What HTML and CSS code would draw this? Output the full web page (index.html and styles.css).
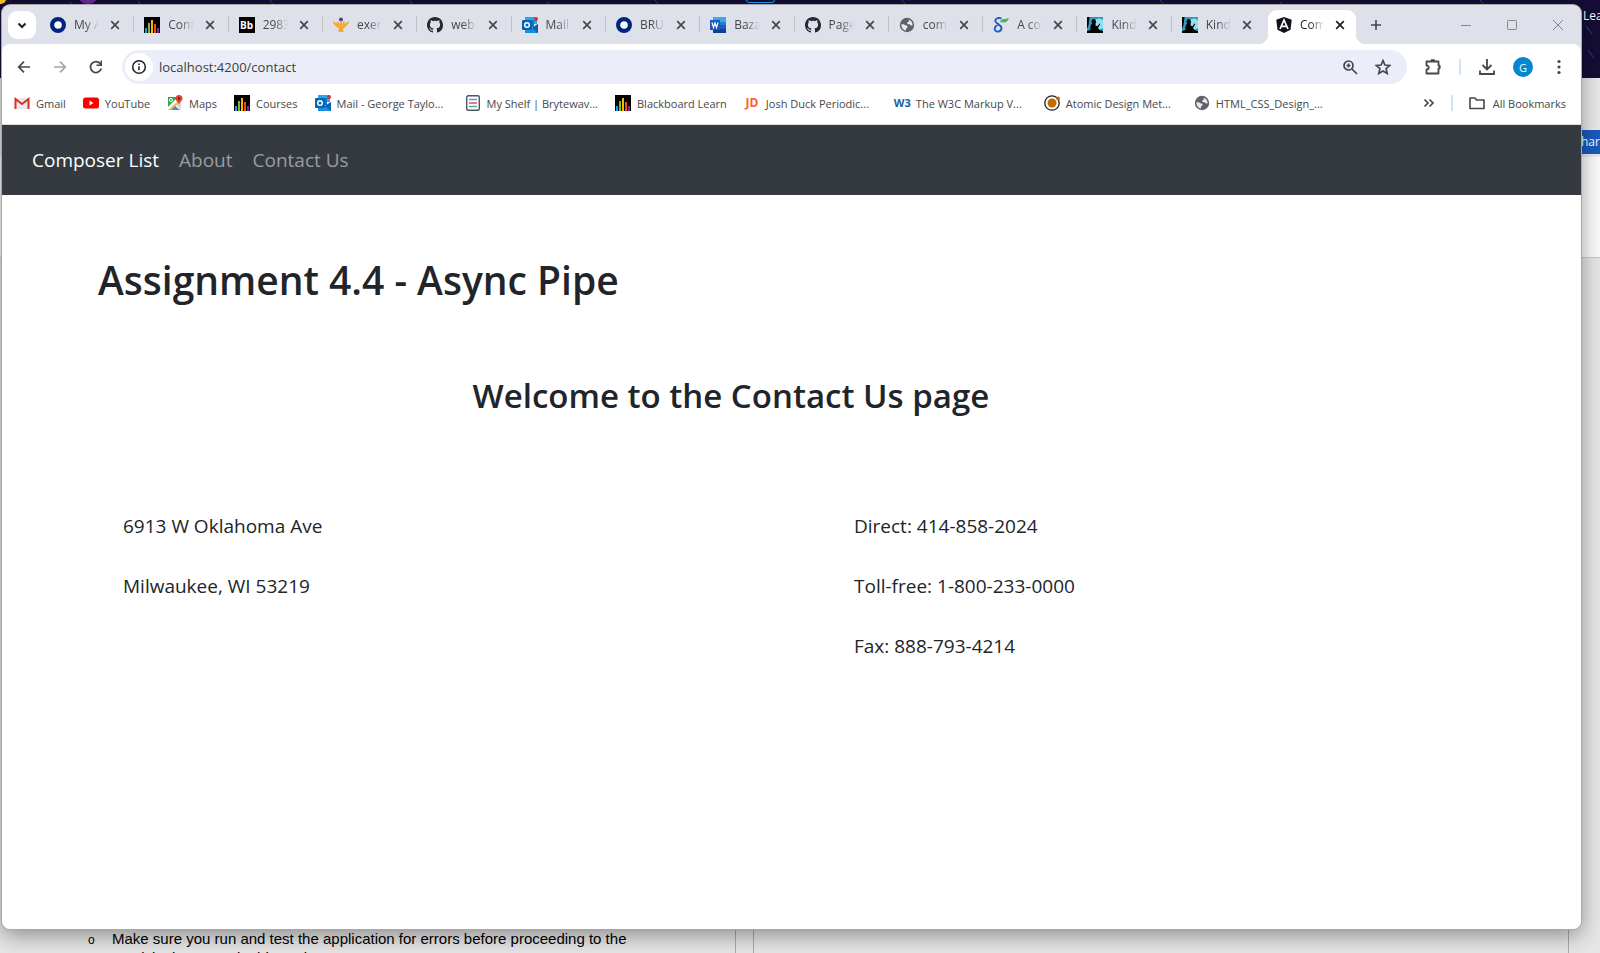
FILE: index.html
```html
<!DOCTYPE html>
<html lang="en">
<head>
<meta charset="utf-8">
<title>Contact Us</title>
<link rel="stylesheet" href="styles.css">
</head>
<body>
<svg class="sprite" aria-hidden="true">
  <symbol id="x" viewBox="0 0 16 16"><path d="M4.200 4.200l7.600 7.600M11.800 4.200l-7.600 7.600" stroke="currentColor" stroke-width="1.700" fill="none"/></symbol>
  <symbol id="ring" viewBox="0 0 16 16"><circle cx="8" cy="8" r="5.900" fill="#fff" stroke="#00267f" stroke-width="4.200"/></symbol>
  <symbol id="bars" viewBox="0 0 16 16"><path fill="#000" d="M0 0h16v16H0z"/><path stroke="#1e9bd8" stroke-width="2" d="M2 11v5"/><path stroke="#7cb82f" stroke-width="2" d="M5 6v10"/><path stroke="#f5b800" stroke-width="2" d="M8 3v13"/><path stroke="#e8501e" stroke-width="2" d="M11 7v9"/><path stroke="#7a2d8c" stroke-width="2" d="M14 11v5"/></symbol>
  <symbol id="github" viewBox="0 0 16 16"><path fill="#24292f" d="M8 0C3.580 0 0 3.580 0 8c0 3.540 2.290 6.530 5.470 7.590.4.070.55-.17.55-.38 0-.19-.01-.82-.01-1.490-2.010.37-2.530-.49-2.690-.94-.09-.23-.48-.94-.82-1.130-.28-.15-.68-.52-.01-.53.63-.01 1.080.58 1.230.82.72 1.210 1.870.87 2.330.66.070-.52.28-.87.51-1.070-1.780-.2-3.640-.89-3.640-3.950 0-.87.31-1.590.82-2.150-.08-.2-.36-1.020.08-2.120 0 0 .67-.21 2.200.82.64-.18 1.320-.27 2-.27s1.360.09 2 .27c1.530-1.040 2.200-.82 2.200-.82.44 1.100.16 1.920.08 2.120.51.56.82 1.270.82 2.150 0 3.070-1.870 3.750-3.650 3.950.29.25.54.73.54 1.480 0 1.070-.01 1.930-.01 2.200 0 .21.15.46.55.38A8.010 8.010 0 0016 8c0-4.420-3.580-8-8-8z"/></symbol>
  <symbol id="outlook" viewBox="0 0 16 16"><path fill="#28a8ea" d="M3 0h12v7H3z"/><path fill="#0078d4" d="M3 3h9v7H3z"/><path fill="#1490df" d="M3 7l7 4 6-4v9H3z"/><path fill="#0a5ea8" d="M10 11l6-4v9z"/><rect y="3" width="10" height="10" rx="1" fill="#0364b8"/><circle cx="5" cy="8" r="2.300" fill="none" stroke="#fff" stroke-width="1.500"/><circle cx="14" cy="2" r="2" fill="#d13438"/></symbol>
  <symbol id="globe" viewBox="0 0 16 16"><circle cx="8" cy="8" r="7.200" fill="#5f6368"/><path d="M2.400 7.300h2.200c1.200 0 1.200 1.300 2.400 1.300.9 0 1.600.5 1.600 1.300 0 1-1.600.9-1.600 1.900v1.800C4.300 13.200 2.200 10.600 2.400 7.300zM9.700 2.700c2.400.8 3.900 2.800 3.900 5.200-.8 1-1.700.6-2.200 0-.6-.8-1.300-.6-2-.6-1.500 0-1.700-2.200-.2-2.300 1 0 .5-1 .5-2.300z" fill="#e8eaed"/></symbol>
  <symbol id="kindle" viewBox="0 0 16 16"><path fill="#2f9abc" d="M0 0h16v16H0z"/><circle cx="12" cy="7" r="5.500" fill="#8fe0ee"/><path fill="#000" d="M0 16v-2l3.500-1C3 10 4 7.500 5.300 6.300a2.300 2.300 0 113.400-.5L8.500 8.500l2 .8 2-2.800.8.600-2.300 4 1.800 2.200L16 14v2zM0 0h2.500L1.500 8 0 12z"/></symbol>
  <symbol id="caret" viewBox="0 0 16 16"><path d="M4.500 6.500L8 10l3.500-3.500" fill="none" stroke="currentColor" stroke-width="2"/></symbol>
</svg>

<div class="desktop" aria-hidden="true">
  <div class="wallpaper"><svg class="streaks" viewBox="0 0 1600 78" preserveAspectRatio="none"><path stroke="#4038a0" d="M70 2l4 5M138 1l3 5M270 0l4 6M410 1l5 6M547 2l3 4M655 0l4 5M902 0l4 5M1160 0l4 5M1280 2l4 4M1480 0l5 6M1586 26l6 8M1588 50l6 8"/><circle cx="88" cy="-7" r="11" fill="#68299a"/><circle cx="1" cy="-1" r="5" fill="#ffc21a"/></svg><i class="taskbox"></i><span class="shortcut">Lea</span></div>
  <div class="word">
    <div class="ribbon-tabs"><span class="share">har</span></div>
    <div class="ribbon"></div>
    <div class="pages">
      <div class="page page-left"><ul class="steps"><li>Make sure you run and test the application for errors before proceeding to the<br>provisioning stage in this assignment.</li></ul></div>
      <div class="page page-right"></div>
    </div>
  </div>
</div>

<div class="window">
  <header class="tabstrip">
    <button class="tab-search" aria-label="Search tabs"><svg class="i16"><use href="#caret"/></svg></button>
    <div class="tabs">
      <div class="tab"><svg class="i16"><use href="#ring"/></svg><span class="label">My Account</span><button class="close" aria-label="Close"><svg class="i16"><use href="#x"/></svg></button></div>
      <div class="tab"><svg class="i16"><use href="#bars"/></svg><span class="label">Content</span><button class="close" aria-label="Close"><svg class="i16"><use href="#x"/></svg></button></div>
      <div class="tab"><span class="bb">Bb</span><span class="label">29835</span><button class="close" aria-label="Close"><svg class="i16"><use href="#x"/></svg></button></div>
      <div class="tab"><svg class="i16" viewBox="0 0 16 16"><path d="M6.500 15V11C6.500 9 3.500 9 3 6M9.500 15V11c0-2 3-2 3.500-5M8 15V5M1 4.500c0 4 3 3 4.500 6M15 4.500c0 4-3 3-4.500 6M5 4.500c0 2 1 3 1.500 4M11 4.500c0 2-1 3-1.500 4" fill="none" stroke="#f3a92c" stroke-width="1.700"/><circle cx="8" cy="2.500" r="2" fill="#5c3d8f"/></svg><span class="label">exercise</span><button class="close" aria-label="Close"><svg class="i16"><use href="#x"/></svg></button></div>
      <div class="tab"><svg class="i16"><use href="#github"/></svg><span class="label">web-450</span><button class="close" aria-label="Close"><svg class="i16"><use href="#x"/></svg></button></div>
      <div class="tab"><svg class="i16"><use href="#outlook"/></svg><span class="label">Mail - George</span><button class="close" aria-label="Close"><svg class="i16"><use href="#x"/></svg></button></div>
      <div class="tab"><svg class="i16"><use href="#ring"/></svg><span class="label">BRU</span><button class="close" aria-label="Close"><svg class="i16"><use href="#x"/></svg></button></div>
      <div class="tab"><svg class="i16" viewBox="0 0 16 16"><path fill="#41a5ee" d="M3 0h13v5H3z"/><path fill="#2b7cd3" d="M3 5h13v3H3z"/><path fill="#185abd" d="M3 8h13v4H3z"/><path fill="#103f91" d="M3 12h13v4H3z"/><path fill="#185abd" d="M0 3h10v10H0z"/><path d="M2 5.500l1.500 5L5 6l1.500 4.500 1.500-5" fill="none" stroke="#fff" stroke-width="1.200"/></svg><span class="label">Bazaar</span><button class="close" aria-label="Close"><svg class="i16"><use href="#x"/></svg></button></div>
      <div class="tab"><svg class="i16"><use href="#github"/></svg><span class="label">Page not</span><button class="close" aria-label="Close"><svg class="i16"><use href="#x"/></svg></button></div>
      <div class="tab"><svg class="i16"><use href="#globe"/></svg><span class="label">com</span><button class="close" aria-label="Close"><svg class="i16"><use href="#x"/></svg></button></div>
      <div class="tab"><svg class="i16" viewBox="0 0 16 16"><path d="M8.500 1.500C5 0 1.500 2 2.500 4.500S9 8 8.500 11.500 3 15.500 2 13s1.500-5.500 4-5.700" fill="none" stroke="#1f5fc4" stroke-width="1.900"/><path fill="#3db85c" d="M7 5c1-3 3-3 5-3l4-1c-1 3-3 5-6 4.500z"/></svg><span class="label">A comp</span><button class="close" aria-label="Close"><svg class="i16"><use href="#x"/></svg></button></div>
      <div class="tab"><svg class="i16"><use href="#kindle"/></svg><span class="label">Kindle</span><button class="close" aria-label="Close"><svg class="i16"><use href="#x"/></svg></button></div>
      <div class="tab"><svg class="i16"><use href="#kindle"/></svg><span class="label">Kindle</span><button class="close" aria-label="Close"><svg class="i16"><use href="#x"/></svg></button></div>
      <div class="tab active"><svg class="i16" viewBox="0 0 16 16"><path fill="#0f1117" d="M8 0l7.700 2.700-1.200 10L8 16l-6.500-3.300-1.200-10z"/><path d="M4 12L8 3l4 9M5.500 9.300h5" fill="none" stroke="#fff" stroke-width="1.700"/></svg><span class="label">Composer</span><button class="close" aria-label="Close"><svg class="i16"><use href="#x"/></svg></button></div>
    </div>
    <button class="new-tab" aria-label="New tab"><svg class="i16" viewBox="0 0 16 16"><path d="M8 3v10M3 8h10" stroke="currentColor" stroke-width="1.600"/></svg></button>
    <div class="win-controls">
      <button aria-label="Minimize"><svg class="i16" viewBox="0 0 16 16"><path d="M3 8.500h10" stroke="currentColor"/></svg></button>
      <button aria-label="Maximize"><svg class="i16" viewBox="0 0 16 16"><rect x="3.500" y="3.500" width="9" height="9" rx="1" fill="none" stroke="currentColor"/></svg></button>
      <button aria-label="Close window"><svg class="i16" viewBox="0 0 16 16"><path d="M3 3l10 10M13 3L3 13" stroke="currentColor"/></svg></button>
    </div>
  </header>

  <div class="toolbar">
    <div class="nav-buttons">
      <button aria-label="Back"><svg class="i16" viewBox="0 0 16 16"><path d="M14 8H3M8 2.700L2.700 8 8 13.300" fill="none" stroke="currentColor" stroke-width="1.700"/></svg></button>
      <button class="off" aria-label="Forward"><svg class="i16" viewBox="0 0 16 16"><path d="M2 8h11M8 2.700L13.300 8 8 13.300" fill="none" stroke="currentColor" stroke-width="1.700"/></svg></button>
      <button aria-label="Reload"><svg class="i16" viewBox="0 0 16 16"><path d="M13.300 9.500A5.500 5.500 0 1112.200 4.500L13.500 6" fill="none" stroke="currentColor" stroke-width="1.700"/><path d="M14 1.500V7H8.500V5.500h4v-4z" fill="currentColor"/></svg></button>
    </div>
    <div class="omnibox">
      <button class="site-info" aria-label="View site information"><svg class="i16" viewBox="0 0 16 16"><circle cx="8" cy="8" r="6.300" fill="none" stroke="currentColor" stroke-width="1.500"/><path d="M8 7.300v4M8 4.500v1.600" stroke="currentColor" stroke-width="1.500"/></svg></button>
      <input class="url" aria-label="Address" value="localhost:4200/contact">
      <button aria-label="Zoom"><svg class="i16" viewBox="0 0 16 16"><circle cx="6.500" cy="6.500" r="4.500" fill="none" stroke="currentColor" stroke-width="1.700"/><path d="M10 10l5 5M6.500 4.500v4M4.500 6.500h4" stroke="currentColor" stroke-width="1.700"/></svg></button>
      <button aria-label="Bookmark this tab"><svg class="i16" viewBox="0 0 16 16"><path d="M8 1.500l1.900 4.500 4.900.400-3.700 3.200 1.100 4.800L8 11.900l-4.200 2.500 1.100-4.800L1.200 6.400l4.900-.400z" fill="none" stroke="currentColor" stroke-width="1.700"/></svg></button>
    </div>
    <div class="actions">
      <button aria-label="Extensions"><svg class="i18" viewBox="0 0 18 18"><path d="M2.500 3.500h12v4.200h1.200v2.600h-1.200v5.200h-12v-4c3 0 3-4 0-4zM7.500 3.500V2.200h2.600v1.300" fill="none" stroke="currentColor" stroke-width="1.800" stroke-linejoin="round"/></svg></button>
      <i class="divider"></i>
      <button aria-label="Downloads"><svg class="i18" viewBox="0 0 18 18"><path d="M9 1v10M4.500 7L9 11.500 13.500 7M2 12.500v3.500h14v-3.500" fill="none" stroke="currentColor" stroke-width="1.800"/></svg></button>
      <button class="avatar" aria-label="Profile">G</button>
      <button aria-label="Menu"><svg class="i16" viewBox="0 0 16 16" fill="currentColor"><circle cx="8" cy="2.500" r="1.600"/><circle cx="8" cy="8" r="1.600"/><circle cx="8" cy="13.500" r="1.600"/></svg></button>
    </div>
  </div>

  <nav class="bookmarks" aria-label="Bookmarks">
    <a href="#"><svg class="i16" viewBox="0 0 16 16"><path fill="#e8eaed" d="M1 3h14v11H1z"/><path d="M1.500 14V4L8 9l6.500-5v10" fill="none" stroke="#d93025" stroke-width="2"/></svg>Gmail</a>
    <a href="#"><svg class="i16" viewBox="0 0 16 16"><rect y="2.500" width="16" height="11" rx="2.500" fill="#f00"/><path fill="#fff" d="M6.500 5.500v5L10.500 8z"/></svg>YouTube</a>
    <a href="#"><svg class="i16" viewBox="0 0 16 16"><path fill="#34a853" d="M1 2h10L1 12z"/><path fill="#fbc02d" d="M1 15L13 4v3L5 15z"/><path fill="#4285f4" d="M4 15l4-4 5 4z"/><path fill="#cfd8dc" d="M9 10l5-3v8z"/><path fill="#db4437" d="M12 0a3.500 3.500 0 013.500 3.500C15.500 6 12.500 7 12 10 11.500 7 8.500 6 8.500 3.500A3.500 3.500 0 0112 0z"/><circle cx="12" cy="3.500" r="1.200" fill="#7b1c14"/><circle cx="4" cy="5" r="1.500" fill="none" stroke="#fff"/></svg>Maps</a>
    <a href="#"><svg class="i16"><use href="#bars"/></svg>Courses</a>
    <a href="#" class="long"><svg class="i16"><use href="#outlook"/></svg>Mail - George Taylo...</a>
    <a href="#" class="long"><svg class="i16" viewBox="0 0 16 16"><rect x="1.700" y=".700" width="12.600" height="14.600" rx="1.500" fill="#fff" stroke="#4a5568" stroke-width="1.400"/><path d="M4 4.500h8" stroke="#5b9bd5" stroke-width="1.300"/><path d="M4 8h8" stroke="#e8476a" stroke-width="1.600"/><path d="M4 11.500h8" stroke="#4caf7d" stroke-width="1.300"/></svg>My Shelf | Brytewav...</a>
    <a href="#"><svg class="i16"><use href="#bars"/></svg>Blackboard Learn</a>
    <a href="#" class="long"><span class="jd">JD</span>Josh Duck Periodic...</a>
    <a href="#" class="long"><span class="w3">W3</span>The W3C Markup V...</a>
    <a href="#" class="long"><svg class="i16" viewBox="0 0 16 16"><circle cx="8" cy="8" r="7.200" fill="#fff" stroke="#222" stroke-width="1.300"/><circle cx="8" cy="8" r="4.500" fill="#c46a00"/><circle cx="14" cy="3.500" r="1.900" fill="#c46a00"/></svg>Atomic Design Met...</a>
    <a href="#" class="long"><svg class="i16"><use href="#globe"/></svg>HTML_CSS_Design_...</a>
    <div class="bookmarks-end">
      <button aria-label="More bookmarks"><svg class="i16" viewBox="0 0 16 16"><path d="M3.500 4.500L7 8l-3.500 3.500M8.500 4.500L12 8l-3.500 3.500" fill="none" stroke="currentColor" stroke-width="1.700"/></svg></button>
      <i class="divider"></i>
      <a href="#"><svg class="i16" viewBox="0 0 16 16"><path d="M1 3h5l1.500 2H15v8.500H1z" fill="none" stroke="currentColor" stroke-width="1.600" stroke-linejoin="round"/></svg>All Bookmarks</a>
    </div>
  </nav>

  <div class="viewport">
    <nav class="navbar"><a href="#" class="current">Composer List</a><a href="#">About</a><a href="#">Contact Us</a></nav>
    <main class="content">
      <h1>Assignment 4.4 - Async Pipe</h1>
      <h2>Welcome to the Contact Us page</h2>
      <div class="columns">
        <div><p>6913 W Oklahoma Ave</p><p>Milwaukee, WI 53219</p></div>
        <div><p>Direct: 414-858-2024</p><p>Toll-free: 1-800-233-0000</p><p>Fax: 888-793-4214</p></div>
      </div>
    </main>
  </div>
</div>
</body>
</html>
```
FILE: styles.css
```css
* { box-sizing: border-box; }
body {
  margin: 0;
  height: 100vh;
  overflow: hidden;
  position: relative;
  background: #e6e6e6;
  font-family: "Open Sans", "Noto Sans", sans-serif;
}
button { border: 0; padding: 0; background: none; color: inherit; font: inherit; display: flex; align-items: center; justify-content: center; }
a { color: inherit; text-decoration: none; }
svg { display: block; flex: none; }
.sprite { position: absolute; width: 0; height: 0; }
.i16 { width: 16px; height: 16px; }
.i18 { width: 18px; height: 18px; }

/* Desktop and document behind the browser */
.desktop { position: absolute; inset: 0; display: flex; flex-direction: column; }
.wallpaper { height: 78px; background: #150d35; position: relative; flex: none; }
.streaks { width: 100%; height: 78px; }
.taskbox { position: absolute; left: 746px; top: -6px; width: 29px; height: 9px; border: 1px solid #2a9df4; border-radius: 3px; }
.shortcut { position: absolute; right: -5px; top: 8px; color: #fff; font-size: 12px; line-height: 16px; width: 22px; }
.word { flex: 1; display: flex; flex-direction: column; min-height: 0; }
.ribbon-tabs { height: 79px; flex: none; background: #e9e9e9; padding-top: 52px; display: flex; justify-content: flex-end; align-items: flex-start; }
.share { background: #185abd; color: #fff; font-size: 12px; line-height: 24px; width: 19px; overflow: hidden; }
.ribbon { height: 101px; flex: none; background: #fbfbfb; border-bottom: 1px solid #c8c8c8; }
.pages { flex: 1; min-height: 0; display: flex; gap: 17px; padding-right: 31px; }
.page { border-right: 1px solid #ababab; display: flex; align-items: flex-end; }
.page-left { width: 736px; }
.page-right { flex: 1; border-left: 1px solid #ababab; }
.steps { margin: 0 0 -13px; padding-left: 112px; list-style: none; font: 15px/17px "Liberation Sans", Arial, sans-serif; color: #000; white-space: nowrap; }
.steps li::before { content: "o"; display: inline-block; width: 24px; margin-left: -24px; font-size: 12px; }

/* Browser window */
.window {
  position: absolute;
  inset: 5px 19px 24px 2px;
  display: flex;
  flex-direction: column;
  background: #dee1e9;
  border-radius: 8px;
  overflow: hidden;
  box-shadow: 0 0 0 1px #a8a8a8, 0 6px 22px rgba(0, 0, 0, .4);
  color: #45474a;
  font-size: 12px;
}
.tabstrip { height: 39px; flex: none; display: flex; align-items: center; padding-left: 6px; }
.tab-search { width: 28px; height: 28px; border-radius: 9px; background: #fff; color: #1f1f1f; flex: none; margin-right: 4px; }
.tabs { flex: 1; min-width: 0; display: flex; align-self: stretch; }
.tab { flex: 1 1 0; min-width: 0; display: flex; align-items: center; padding: 0 11px 0 10px; position: relative; }
.tab::after { content: ""; position: absolute; right: 0; top: 11px; width: 1px; height: 16px; background: #c2c2c2; }
.tab:nth-last-child(2)::after { content: none; }
.label { flex: 1; min-width: 0; margin-left: 8px; overflow: hidden; white-space: nowrap; mask-image: linear-gradient(90deg, #000 45%, transparent); }
.close { width: 16px; height: 16px; margin-left: 8px; flex: none; }
.tab.active { flex: 0 0 88px; background: #fff; margin: 5px 4px 0 2px; padding: 0 8px 5px; border-radius: 9px 9px 0 0; color: #1f1f1f; }
.tab.active::before, .tab.active::after { content: ""; position: absolute; top: auto; bottom: 0; width: 9px; height: 9px; }
.tab.active::before { left: -9px; background: radial-gradient(circle at 0 0, #dee1e9 9px, #fff 9px); }
.tab.active::after { right: -9px; background: radial-gradient(circle at 100% 0, #dee1e9 9px, #fff 9px); }
.new-tab { width: 32px; height: 32px; margin-right: 51px; flex: none; }
.win-controls { display: flex; align-self: stretch; color: #858789; }
.win-controls button { width: 46px; }

.toolbar { height: 46px; flex: none; display: flex; align-items: center; background: #fff; border-radius: 8px 8px 0 0; padding: 0 4px; }
.nav-buttons { display: flex; margin-right: 8px; }
.nav-buttons button { width: 36px; height: 32px; }
.nav-buttons .off { color: #a6a6a6; }
.omnibox { flex: 1; display: flex; align-items: center; height: 34px; border-radius: 17px; background: #ebeef8; padding: 0 8px 0 3px; }
.omnibox button { width: 33px; height: 28px; }
.omnibox .site-info { width: 28px; border-radius: 14px; background: #fff; color: #1f1f1f; }
.url { flex: 1; min-width: 0; border: 0; background: none; outline: 0; padding: 0 0 0 6px; color: #3c3d40; font: 13px/20px "Open Sans", "Noto Sans", sans-serif; }
.actions { display: flex; align-items: center; padding-left: 8px; }
.actions button { width: 36px; height: 32px; }
.actions .avatar { width: 20px; height: 20px; margin: 0 8px; border-radius: 10px; background: #0288d1; color: #fff; font-size: 11px; }
.divider { width: 2px; height: 16px; background: #d3e3fd; margin: 0 8px; flex: none; }

.bookmarks { height: 35px; flex: none; display: flex; align-items: center; gap: 17px; padding: 0 15px 8px 12px; background: #fff; border-bottom: 1px solid #dcdcdc; white-space: nowrap; font-size: 11px; }
.bookmarks a { display: flex; align-items: center; gap: 6px; }
.bookmarks .long { min-width: 133px; }
.jd, .w3 { width: 16px; font-weight: 700; text-align: center; line-height: 16px; }
.jd { color: #ff5a36; font-size: 12px; }
.w3 { color: #1460a8; }
.bb { width: 16px; height: 16px; background: #000; color: #fff; font-size: 10px; line-height: 16px; font-weight: 700; text-align: center; }
.bookmarks-end { margin-left: auto; display: flex; align-items: center; }
.bookmarks-end a { gap: 8px; }
.bookmarks-end .divider { margin: 0 16px 0 14px; }

/* Page */
.viewport { flex: 1; background: #fff; }
.navbar { display: flex; align-items: center; gap: 20px; height: 70px; padding-left: 30px; background: #343a40; color: #9a9da0; font-size: 19px; }
.navbar .current { color: #fff; }
.content { padding: 60px 96px; color: #212529; }
h1, h2 { margin: 0; font-weight: 600; }
h1 { font-size: 39px; line-height: 50px; }
h2 { font-size: 33px; line-height: 44px; padding-left: 27%; margin-top: 69px; }
.columns { display: grid; grid-template-columns: 1fr 1fr; column-gap: 4px; margin: 78px -96px 0 25px; }
p { margin: 0; font-size: 19px; line-height: 60px; }
```
